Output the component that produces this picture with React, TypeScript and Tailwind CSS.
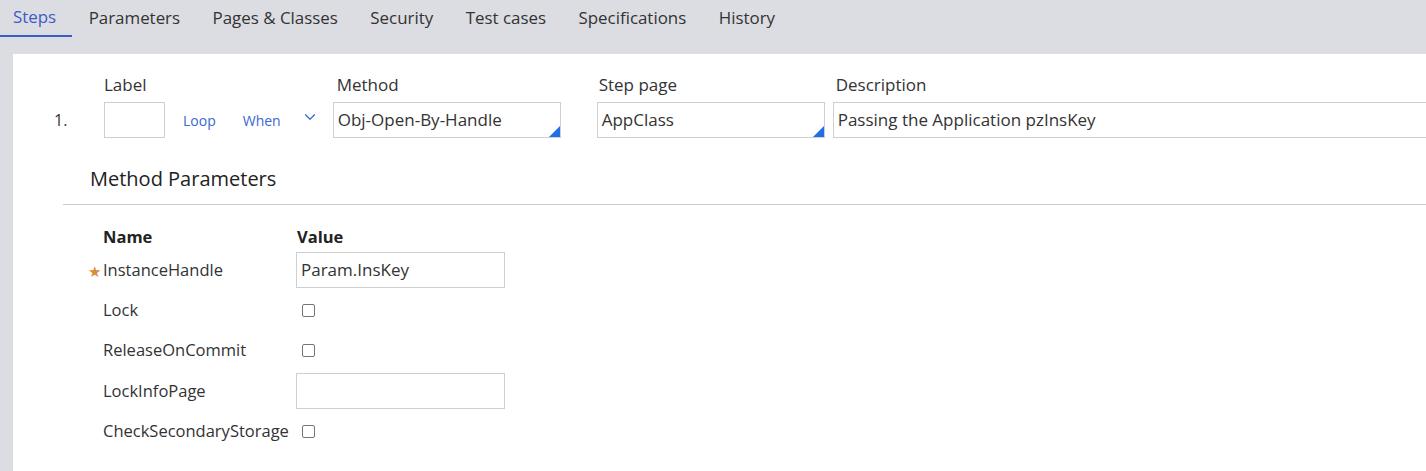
import { ChevronDown } from "lucide-react";

const tabs = ["Steps", "Parameters", "Pages & Classes", "Security", "Test cases", "Specifications", "History"];

function Corner() {
  return (
    <span className="absolute right-0 bottom-0 w-0 h-0 border-l-[11px] border-l-transparent border-b-[11px] border-b-[#1f6fe5]" />
  );
}

function TextBox({ value, width, dropdown }: { value?: string; width: string; dropdown?: boolean }) {
  return (
    <div className={`relative h-[36px] border border-[#cfcfcf] bg-white flex items-center px-[4px] text-[17px] text-[#333] ${width}`}>
      <span>{value}</span>
      {dropdown && <Corner />}
    </div>
  );
}

function Checkbox() {
  return <span className="ml-[6px] w-[13px] h-[13px] rounded-[2px] border border-[#767676] bg-white" />;
}

const params: { name: string; kind: "text" | "check"; value?: string; required?: boolean }[] = [
  { name: "InstanceHandle", kind: "text", value: "Param.InsKey", required: true },
  { name: "Lock", kind: "check" },
  { name: "ReleaseOnCommit", kind: "check" },
  { name: "LockInfoPage", kind: "text", value: "" },
  { name: "CheckSecondaryStorage", kind: "check" },
];

export default function App() {
  return (
    <div
      className="w-[1426px] h-[471px] bg-[#dcdde2] flex flex-col overflow-hidden"
      style={{ fontFamily: '"Open Sans", "Noto Sans", sans-serif' }}
    >
      {/* Tabs */}
      <div className="flex h-[37px] shrink-0">
        {tabs.map((t, i) => (
          <div
            key={t}
            className={`h-full flex items-center pl-[13px] pr-[16px] pb-[1px] text-[16.9px] ${
              i === 0 ? "text-[#3b5cc6] border-b-[2px] border-[#3b5cc6]" : "text-[#333]"
            } ${i > 0 ? "ml-[3.5px]" : ""}`}
          >
            {t}
          </div>
        ))}
      </div>

      {/* Panel */}
      <div className="ml-[13px] mt-[17px] flex-1 bg-white">
        {/* Step row */}
        <div className="flex items-end pt-[20px]">
          <div className="w-[91px] h-[36px] flex items-center pl-[41px] text-[16px] text-[#333]">1.</div>
          <div className="flex flex-col">
            <span className="text-[17px] leading-[22px] text-[#333] mb-[6px]">Label</span>
            <TextBox width="w-[61px]" />
          </div>
          <div className="h-[36px] flex items-center text-[14px] text-[#3a68d4]">
            <span className="ml-[18px]">Loop</span>
            <span className="ml-[27px]">When</span>
            <ChevronDown size={18} strokeWidth={1.6} className="ml-[20px] text-[#3a68d4] -mt-[6px]" />
          </div>
          <div className="flex flex-col ml-[14px]">
            <span className="text-[17px] leading-[22px] text-[#333] mb-[6px] pl-[4px]">Method</span>
            <TextBox width="w-[228px]" value="Obj-Open-By-Handle" dropdown />
          </div>
          <div className="flex flex-col ml-[36px]">
            <span className="text-[17px] leading-[22px] text-[#333] mb-[6px] pl-[2px]">Step page</span>
            <TextBox width="w-[228px]" value="AppClass" dropdown />
          </div>
          <div className="flex flex-col ml-[8px] flex-1">
            <span className="text-[17px] leading-[22px] text-[#333] mb-[6px] pl-[3px]">Description</span>
            <div className="h-[36px] border-y border-l border-[#cfcfcf] flex items-center px-[4px] text-[17px] text-[#333]">
              Passing the Application pzInsKey
            </div>
          </div>
        </div>

        {/* Method parameters */}
        <div className="ml-[77px] mt-[27px] text-[20px] leading-[28px] text-[#222]">Method Parameters</div>
        <div className="ml-[50px] mt-[11px] border-t border-[#cccccc]" />

        <div className="ml-[75px] mt-[21px] flex flex-col">
          <div className="flex text-[16.5px] font-bold text-[#222] leading-[22px]">
            <span className="w-[209px] pl-[15px]">Name</span>
            <span>Value</span>
          </div>
          <div className="flex flex-col mt-[2px]">
            {params.map((p) => (
              <div key={p.name} className="h-[40.25px] flex items-center text-[16.5px] text-[#333]">
                <div className="w-[208px] flex items-center">
                  <span className="w-[15px] text-[#d98c34] text-[15px] pt-[3px]">{p.required ? "★" : ""}</span>
                  <span>{p.name}</span>
                </div>
                {p.kind === "text" ? (
                  <TextBox width="w-[209px]" value={p.value} />
                ) : (
                  <Checkbox />
                )}
              </div>
            ))}
          </div>
        </div>
      </div>
    </div>
  );
}
